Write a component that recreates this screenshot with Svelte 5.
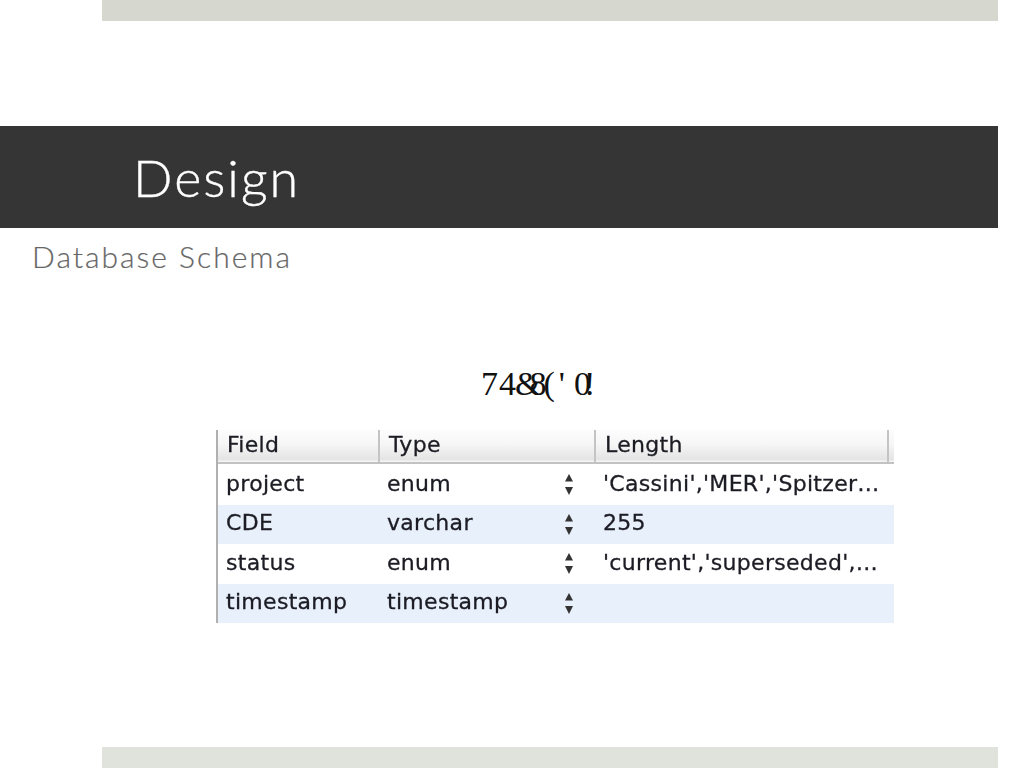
<script>
    const rows = [
        { field: 'project', type: 'enum', length: "'Cassini','MER','Spitzer…" },
        { field: 'CDE', type: 'varchar', length: '255' },
        { field: 'status', type: 'enum', length: "'current','superseded',…" },
        { field: 'timestamp', type: 'timestamp', length: '' }
    ];

    // the heading in the slide is a broken font, each glyph sits at its own offset
    const glyphs = [
        { ch: '7', shift: 0 },
        { ch: '4', shift: 1 },
        { ch: '&', shift: -1 },
        { ch: '8', shift: -12 },
        { ch: '(', shift: -3 },
        { ch: "'", shift: 4 },
        { ch: '0', shift: 9 },
        { ch: '!', shift: -7 }
    ];
</script>

<div class="slide">
    <div class="bar top"></div>
    <div class="band"><h1>Design</h1></div>
    <h2>Database Schema</h2>
    <p class="garbled">
        {#each glyphs as g}<span style="margin-left:{g.shift}px">{g.ch}</span>{/each}
    </p>

    <div class="schema">
        <div class="head">
            <div class="hcell">Field</div>
            <div class="hcell">Type</div>
            <div class="hcell">Length</div>
        </div>
        {#each rows as row, i}
            <div class="row" class:alt={i % 2 === 1}>
                <div class="cell">{row.field}</div>
                <div class="cell typecell">
                    <span>{row.type}</span>
                    <svg class="stepper" width="8" height="21" viewBox="0 0 8 21">
                        <path d="M4 0 L8 7.5 L0 7.5 Z" />
                        <path d="M0 13 L8 13 L4 21 Z" />
                    </svg>
                </div>
                <div class="cell lencell">{row.length}</div>
            </div>
        {/each}
    </div>

    <div class="bar bottom"></div>
</div>

<style>
    :global(body) {
        margin: 0;
        background: #fff;
    }

    .slide {
        width: 1024px;
        height: 768px;
        overflow: hidden;
        display: flex;
        flex-direction: column;
    }

    .bar {
        width: 896px;
        height: 21px;
        margin-left: 102px;
        background: #d6d8d0;
        flex: none;
    }

    .bottom {
        margin-top: 124px;
        background: #e0e2dc;
    }

    .band {
        width: 998px;
        height: 102px;
        margin-top: 105px;
        background: #353535;
        flex: none;
        display: flex;
        align-items: center;
    }

    h1 {
        margin: 0 0 0 133px;
        font: 300 52px "Lato", sans-serif;
        letter-spacing: 2px;
        -webkit-text-stroke: 0.4px #fff;
        color: #fff;
    }

    h2 {
        margin: 11px 0 0 32px;
        font: 300 30px/34px "Lato", sans-serif;
        letter-spacing: 2px;
        -webkit-text-stroke: 0.2px #666;
        color: #666;
    }

    .garbled {
        margin: 91px 0 0 481px;
        height: 66px;
        font: 34px/40px "Liberation Serif", serif;
        color: #111;
    }

    .schema {
        width: 678px;
        margin-left: 216px;
        border-left: 2px solid #b0b0b0;
        box-sizing: border-box;
        font-family: "DejaVu Sans", sans-serif;
        font-size: 22px;
        letter-spacing: 0.3px;
        -webkit-text-stroke: 0.3px #1c1c24;
        color: #1c1c24;
        filter: blur(0.4px);
    }

    .head, .row {
        display: grid;
        grid-template-columns: 162px 216px 1fr;
    }

    .head {
        grid-template-columns: 162px 216px 293px 1fr;
        height: 34px;
        box-sizing: border-box;
        background: linear-gradient(#fdfdfd, #f6f6f6 45%, #e4e4e4 92%, #f8f8f8);
        border-bottom: 2px solid #c2c2c2;
    }

    .hcell {
        padding-left: 9px;
        border-right: 2px solid #c4c4c4;
        line-height: 30px;
    }

    .row {
        height: 39.5px;
        line-height: 37px;
    }

    .row:nth-child(2) {
        height: 41px;
        line-height: 39px;
    }

    .row.alt {
        background: #e8f0fc;
        line-height: 35px;
    }

    .cell {
        padding-left: 8px;
    }

    .typecell {
        display: flex;
        align-items: flex-start;
        justify-content: space-between;
        padding: 0 23px 0 7px;
    }

    .lencell {
        white-space: nowrap;
        padding-left: 7px;
    }

    .stepper {
        align-self: center;
        fill: #333;
    }
</style>
